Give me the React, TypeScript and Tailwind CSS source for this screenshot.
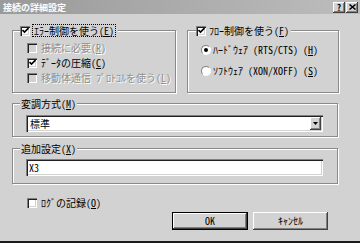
import type { ReactNode } from "react";

const raised =
  "shadow-[inset_-1px_-1px_0_#404040,inset_1px_1px_0_#ffffff,inset_-2px_-2px_0_#808080]";
const sunken =
  "shadow-[inset_1px_1px_0_#808080,inset_2px_2px_0_#202020,inset_-1px_-1px_0_#ffffff,inset_-2px_-2px_0_#d2d2d2]";

function Key({ k }: { k: string }) {
  return (
    <>
      (<span className="underline underline-offset-1">{k}</span>)
    </>
  );
}

function CheckBox({ checked, disabled }: { checked?: boolean; disabled?: boolean }) {
  return (
    <span
      className={`w-[10px] h-[10px] shrink-0 flex items-center justify-center ${sunken} ${
        disabled ? "bg-[#d2d2d2]" : "bg-white"
      }`}
    >
      {checked && (
        <svg width="7" height="7" viewBox="0 0 7 7">
          <path d="M0.5 3 L2.5 5 L6.5 1" stroke="#000" strokeWidth="1.6" fill="none" />
        </svg>
      )}
    </span>
  );
}

function Radio({ on }: { on?: boolean }) {
  return (
    <span className="w-[10px] h-[10px] shrink-0 rounded-full bg-white border border-t-[#808080] border-l-[#808080] border-r-white border-b-white flex items-center justify-center">
      {on && <span className="w-[4px] h-[4px] rounded-full bg-black" />}
    </span>
  );
}

function Group({ className, children }: { className: string; children: ReactNode }) {
  return (
    <div
      className={`flex flex-col border border-[#8a8a8a] shadow-[inset_1px_1px_0_#ffffff,1px_1px_0_#ffffff] ${className}`}
    >
      {children}
    </div>
  );
}

function Row({ children, disabled }: { children: ReactNode; disabled?: boolean }) {
  return (
    <div
      className={`h-[15px] flex items-center gap-[4px] ${
        disabled ? "text-[#8e8e8e] [text-shadow:1px_1px_0_#ffffff]" : ""
      }`}
    >
      {children}
    </div>
  );
}

export default function App() {
  return (
    <div className="w-[360px] h-[243px] bg-[#d2d2d2] border-b-2 border-[#1a1a1a] flex flex-col font-['Noto_Sans_CJK_JP',sans-serif] text-[10px] leading-none text-black [font-feature-settings:'hwid'] overflow-hidden">
      <div className="h-[14px] shrink-0 flex items-center justify-between bg-gradient-to-r from-[#9a9a9a] to-[#bdbdbd] pl-[3px] pr-[2px]">
        <span className="text-white text-[9px] font-bold">接続の詳細設定</span>
        <div className="flex gap-[1px]">
          <span className={`w-[12px] h-[11px] bg-[#d2d2d2] ${raised} flex items-center justify-center text-[9px] font-bold`}>
            ?
          </span>
          <span className={`w-[12px] h-[11px] bg-[#d2d2d2] ${raised} flex items-center justify-center`}>
            <svg width="7" height="6" viewBox="0 0 7 6">
              <path d="M0.5 0.5 L6.5 5.5 M6.5 0.5 L0.5 5.5" stroke="#000" strokeWidth="1.5" />
            </svg>
          </span>
        </div>
      </div>

      <div className="flex gap-[11px] pl-[12px] mt-[16px]">
        <Group className="w-[164px] h-[63px]">
          <div className="-mt-[7px] ml-[7px] self-start h-[13px] flex items-center gap-[2px] bg-[#d2d2d2] pr-[2px]">
            <CheckBox checked />
            <span className="border border-dotted border-black h-[13px] flex items-center px-[1px]">
              ｴﾗｰ制御を使う<Key k="E" />
            </span>
          </div>
          <div className="flex flex-col pl-[14px] mt-[3px]">
            <Row disabled>
              <CheckBox disabled />
              <span>接続に必要<Key k="R" /></span>
            </Row>
            <Row>
              <CheckBox checked />
              <span>ﾃﾞｰﾀの圧縮<Key k="C" /></span>
            </Row>
            <Row disabled>
              <CheckBox disabled />
              <span>移動体通信 ﾌﾟﾛﾄｺﾙを使う<Key k="L" /></span>
            </Row>
          </div>
        </Group>

        <Group className="w-[152px] h-[63px]">
          <div className="-mt-[7px] ml-[8px] self-start h-[13px] flex items-center gap-[3px] bg-[#d2d2d2] pr-[2px]">
            <CheckBox checked />
            <span>ﾌﾛｰ制御を使う<Key k="F" /></span>
          </div>
          <div className="flex flex-col gap-[6px] pl-[13px] mt-[5px]">
            <div className="h-[15px] flex items-center gap-[2px]">
              <Radio on />
              <span>ﾊｰﾄﾞｳｪｱ (RTS/CTS) <Key k="H" /></span>
            </div>
            <div className="h-[15px] flex items-center gap-[2px]">
              <Radio />
              <span>ｿﾌﾄｳｪｱ (XON/XOFF) <Key k="S" /></span>
            </div>
          </div>
        </Group>
      </div>

      <Group className="ml-[12px] w-[326px] h-[34px] mt-[10px]">
        <div className="-mt-[7px] ml-[7px] self-start h-[13px] flex items-center bg-[#d2d2d2] px-[1px]">
          変調方式<Key k="M" />
        </div>
        <div className={`ml-[13px] mt-[5px] w-[297px] h-[17px] bg-white ${sunken} flex items-center justify-between pl-[4px] pr-[2px]`}>
          <span>標準</span>
          <span className={`w-[11px] h-[13px] bg-[#d2d2d2] ${raised} flex items-center justify-center`}>
            <svg width="5" height="3" viewBox="0 0 5 3">
              <path d="M0 0 H5 L2.5 3 Z" fill="#000" />
            </svg>
          </span>
        </div>
      </Group>

      <Group className="ml-[12px] w-[326px] h-[36px] mt-[11px]">
        <div className="-mt-[7px] ml-[7px] self-start h-[13px] flex items-center bg-[#d2d2d2] px-[1px]">
          追加設定<Key k="X" />
        </div>
        <div className={`ml-[13px] mt-[4px] w-[297px] h-[17px] bg-white ${sunken} flex items-center pl-[3px]`}>
          X3
        </div>
      </Group>

      <div className="ml-[27px] mt-[12px] h-[13px] flex items-center gap-[4px]">
        <CheckBox />
        <span>ﾛｸﾞの記録<Key k="O" /></span>
      </div>

      <div className="mt-[3px] flex justify-end gap-[5px] pr-[32px]">
        <button className={`w-[76px] h-[18px] bg-[#d2d2d2] border border-black ${raised} flex items-center justify-center`}>
          OK
        </button>
        <button className={`w-[75px] h-[18px] bg-[#d2d2d2] ${raised} flex items-center justify-center`}>
          ｷｬﾝｾﾙ
        </button>
      </div>
    </div>
  );
}
